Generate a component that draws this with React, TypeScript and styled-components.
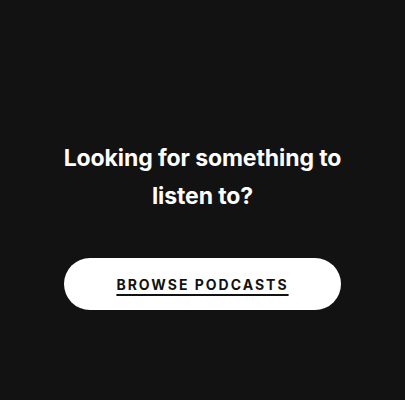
import React from 'react'
import styled, { createGlobalStyle } from 'styled-components'

const GlobalStyle = createGlobalStyle`
    html, body {
        margin: 0;
        padding: 0;
        background: #121212;
    }
    body {
        font-family: Inter, "Noto Sans", sans-serif;
    }
`

const Page = styled.div`
    height: 400px;
    display: flex;
    flex-direction: column;
    align-items: center;
    padding-top: 139px;
    box-sizing: border-box;
`

const Heading = styled.h2`
    margin: 0;
    width: 300px;
    color: #fff;
    text-align: center;
    font-size: 23px;
    font-weight: 700;
    line-height: 38px;
    letter-spacing: -0.1px;
`

const BrowseButton = styled.button`
    margin-top: 43px;
    width: 277px;
    height: 52px;
    border: none;
    border-radius: 26px;
    background: #fff;
    color: #121212;
    font-family: Inter, "Noto Sans", sans-serif;
    font-size: 14px;
    font-weight: 700;
    letter-spacing: 2px;
    text-decoration: underline;
    text-underline-offset: 4px;
    text-decoration-thickness: 1.5px;
    cursor: pointer;
`

const App = () => {
    return (
        <>
            <GlobalStyle />
            <Page>
                <Heading>Looking for something to listen to?</Heading>
                <BrowseButton>BROWSE PODCASTS</BrowseButton>
            </Page>
        </>
    )
}

export default App
